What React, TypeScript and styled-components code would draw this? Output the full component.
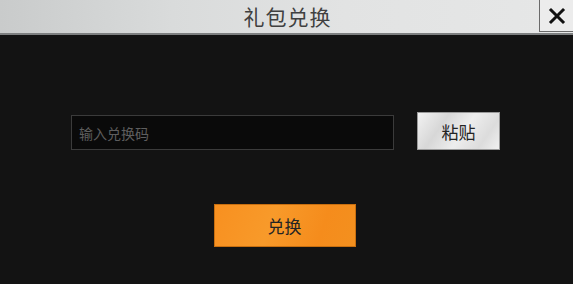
import React from 'react';
import styled, { createGlobalStyle } from 'styled-components';

const GlobalStyle = createGlobalStyle`
  html, body {
    margin: 0;
    padding: 0;
    background: #131313;
  }
  body {
    font-family: "Noto Sans CJK SC", "Noto Sans", sans-serif;
  }
`;

const Screen = styled.div`
  width: 573px;
  height: 284px;
  display: flex;
  flex-direction: column;
  background: #131313;
  overflow: hidden;
`;

const Header = styled.div`
  position: relative;
  height: 33px;
  flex-shrink: 0;
  display: flex;
  justify-content: center;
  align-items: center;
  background: linear-gradient(90deg, #c9cbcb 0%, #d9dbdb 30%, #e2e3e3 60%, #e6e7e7 100%);
  border-bottom: 2px solid #7d7f80;
`;

const Title = styled.div`
  font-size: 21px;
  color: #404040;
  letter-spacing: 1px;
  line-height: 1;
  margin-left: 2px;
`;

const CloseButton = styled.button`
  position: absolute;
  top: 0;
  right: 0;
  width: 34px;
  height: 32px;
  padding: 0;
  background: #ececec;
  border: 1px solid #6a6a6a;
  border-top: none;
  border-right: none;
  display: flex;
  align-items: center;
  justify-content: center;
  cursor: pointer;
`;

const Body = styled.div`
  flex: 1;
  display: flex;
  flex-direction: column;
  align-items: center;
  padding-top: 77px;
`;

const InputRow = styled.div`
  display: flex;
  align-items: flex-end;
  gap: 23px;
  margin-right: 2px;
`;

const CodeInput = styled.input`
  all: unset;
  box-sizing: border-box;
  width: 323px;
  height: 35px;
  padding: 0 7px;
  background: #0a0a0a;
  border: 1px solid #3b3b3b;
  font-size: 14px;
  color: #cccccc;
  &::placeholder {
    color: #5e5e5e;
  }
`;

const TextureButton = styled.button<{ variant: 'paste' | 'primary' }>`
  box-sizing: border-box;
  display: flex;
  align-items: center;
  justify-content: center;
  padding: 0;
  font-family: "Noto Sans CJK SC", "Noto Sans", sans-serif;
  font-size: 17px;
  color: #242424;
  cursor: pointer;
  width: ${(p) => (p.variant === 'paste' ? '83px' : '142px')};
  height: ${(p) => (p.variant === 'paste' ? '38px' : '43px')};
  border: ${(p) => (p.variant === 'paste' ? '1px solid #9a9a9a' : '1px solid #c86f10')};
  background: ${(p) =>
    p.variant === 'paste'
      ? 'linear-gradient(125deg, #f2f2f2 0%, #d7d7d7 30%, #ededed 55%, #dcdcdc 80%, #f0f0f0 100%)'
      : 'linear-gradient(110deg, #f89020 0%, #f89a2a 40%, #f58c1c 75%, #f3901f 100%)'};
`;

const ActionRow = styled.div`
  margin-top: 54px;
  margin-right: 4px;
`;

const CloseIcon = () => (
  <svg width="18" height="18" viewBox="0 0 18 18">
    <path d="M3 3 L15 15 M15 3 L3 15" stroke="#111" strokeWidth="3" strokeLinecap="square" />
  </svg>
);

const App = () => {
  return (
    <Screen>
      <GlobalStyle />
      <Header>
        <Title>礼包兑换</Title>
        <CloseButton aria-label="关闭">
          <CloseIcon />
        </CloseButton>
      </Header>
      <Body>
        <InputRow>
          <CodeInput type="text" placeholder="输入兑换码" />
          <TextureButton variant="paste">粘贴</TextureButton>
        </InputRow>
        <ActionRow>
          <TextureButton variant="primary">兑换</TextureButton>
        </ActionRow>
      </Body>
    </Screen>
  );
};

export default App;
